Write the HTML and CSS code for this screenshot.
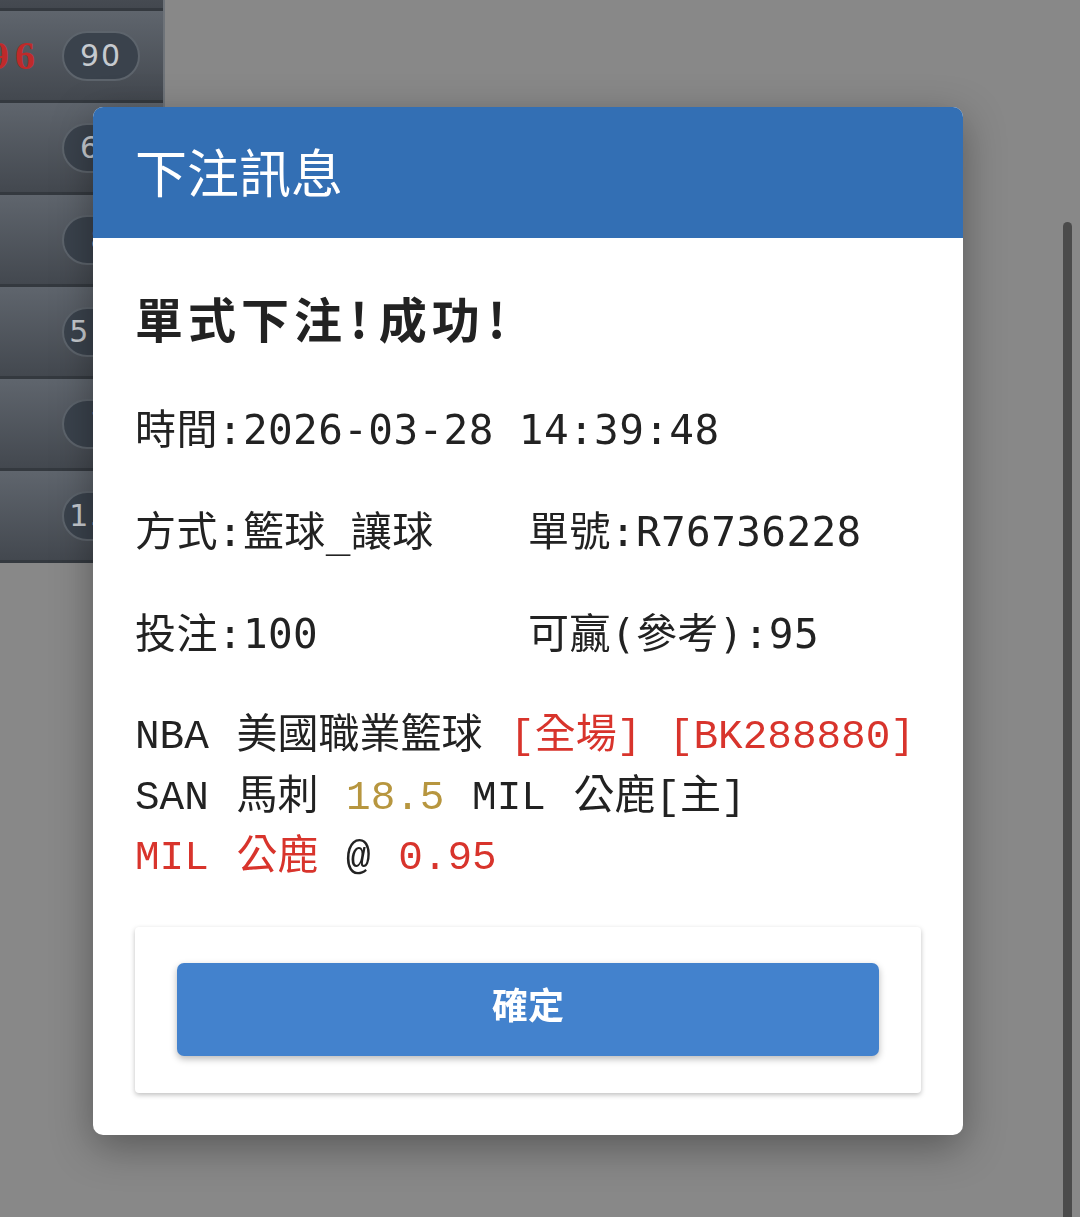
FILE: index.html
```html
<!DOCTYPE html>
<html>
<head>
    <meta charset="UTF-8">
    <meta name="viewport" content="width=device-width, initial-scale=1.0">
    <title>下注訊息</title>
    <link rel="stylesheet" href="styles.css">
</head>
<body>
    <!-- page behind the dialog -->
    <div class="list">
        <div class="row"></div>
        <div class="row"><span class="score">96</span><span class="pill">90</span></div>
        <div class="row"><span class="pill">65</span></div>
        <div class="row"><span class="pill">8</span></div>
        <div class="row"><span class="pill">510</span></div>
        <div class="row"><span class="pill">7</span></div>
        <div class="row"><span class="pill">150</span></div>
    </div>
    <div class="scrollbar"></div>

    <div class="overlay">
        <div class="modal">
            <div class="modal-header">下注訊息</div>
            <div class="modal-body">
                <div class="result">單式下注<span class="bang">!</span>成功<span class="bang">!</span></div>
                <div class="info">時間:2026-03-28 14:39:48</div>
                <div class="info two">
                    <span>方式:籃球_讓球</span>
                    <span>單號:R76736228</span>
                </div>
                <div class="info two">
                    <span>投注:100</span>
                    <span>可贏(參考):95</span>
                </div>
                <div class="detail">
                    <div>NBA 美國職業籃球 <span class="red">[全場]</span> <span class="red">[BK288880]</span></div>
                    <div>SAN 馬刺 <span class="gold">18.5</span> MIL 公鹿[主]</div>
                    <div><span class="red">MIL 公鹿</span> @ <span class="red">0.95</span></div>
                </div>
                <div class="actions">
                    <button class="btn-ok" onclick="document.querySelector('.overlay').style.display='none'">確定</button>
                </div>
            </div>
        </div>
    </div>
</body>
</html>
```

FILE: styles.css
```css
body {
    margin: 0;
    background: #888888;
    font-family: "Noto Sans CJK TC", "Noto Sans", sans-serif;
    color: #222;
}

/* list behind the overlay */
.list {
    width: 163px;
    margin-top: -81px;
    border-right: 2px solid #6e7379;
}
.row {
    height: 92px;
    box-sizing: border-box;
    border-bottom: 3px solid #34393f;
    background: linear-gradient(#5f656d, #43484f);
    display: flex;
    align-items: center;
    padding-left: 62px;
}
.score {
    flex-shrink: 0;
    width: 80px;
    margin-left: -101px;
    margin-right: 21px;
    font-family: "Liberation Serif", serif;
    font-weight: bold;
    font-size: 40px;
    letter-spacing: 6px;
    color: #bf2a2a;
    text-align: right;
}
.pill {
    flex-shrink: 0;
    width: 78px;
    height: 50px;
    box-sizing: border-box;
    border-radius: 25px;
    background: #3a424c;
    border: 2px solid #5d646c;
    color: #c6cacf;
    font-family: "DejaVu Sans", sans-serif;
    font-size: 30px;
    letter-spacing: 2px;
    line-height: 46px;
    text-align: center;
    white-space: nowrap;
    overflow: hidden;
}
.scrollbar {
    position: fixed;
    right: 8px;
    top: 222px;
    bottom: 0;
    width: 9px;
    border-radius: 5px 5px 0 0;
    background: #4b4b4b;
}

/* dialog */
.overlay {
    position: fixed;
    top: 0;
    left: 0;
    right: 24px;
    bottom: 0;
    display: flex;
    justify-content: center;
    align-items: flex-start;
    padding-top: 107px;
}
.modal {
    width: 870px;
    background: #fff;
    border-radius: 10px;
    overflow: hidden;
    box-shadow: 0 12px 40px rgba(0, 0, 0, 0.35);
}
.modal-header {
    height: 131px;
    background: #336fb4;
    color: #fff;
    font-size: 52px;
    line-height: 127px;
    padding-left: 42px;
}
.modal-body {
    padding: 50px 42px 42px;
    display: flex;
    flex-direction: column;
    gap: 42px;
}
.result {
    font-size: 48px;
    font-weight: bold;
    letter-spacing: 5px;
    line-height: 70px;
    margin: -6px 0 6px;
}
.bang {
    margin: 0 6px 0 3px;
}
.info {
    font-family: "DejaVu Sans Mono", "Noto Sans CJK TC", monospace;
    font-size: 41px;
    letter-spacing: 0.4px;
    line-height: 60px;
}
.info.two {
    display: grid;
    grid-template-columns: 1fr 1fr;
}
.detail {
    font-family: "Liberation Mono", "Noto Sans CJK TC", monospace;
    font-size: 41px;
    word-spacing: 3px;
    line-height: 60.5px;
    padding-top: 1px;
    margin-bottom: -3.5px;
    white-space: nowrap;
}
.red {
    color: #d8342c;
}
.gold {
    color: #b7963f;
}
.actions {
    background: #fff;
    border-radius: 4px;
    box-shadow: 0 2px 5px rgba(0, 0, 0, 0.25);
    padding: 36px 42px 37px;
}
.btn-ok {
    display: block;
    width: 100%;
    height: 93px;
    padding: 0 0 14px;
    border: none;
    border-radius: 7px;
    background: #4382cd;
    color: #fff;
    font-family: "Noto Sans CJK TC", sans-serif;
    font-size: 36px;
    font-weight: bold;
    box-shadow: 0 3px 7px rgba(0, 0, 0, 0.28);
    cursor: pointer;
}
```
